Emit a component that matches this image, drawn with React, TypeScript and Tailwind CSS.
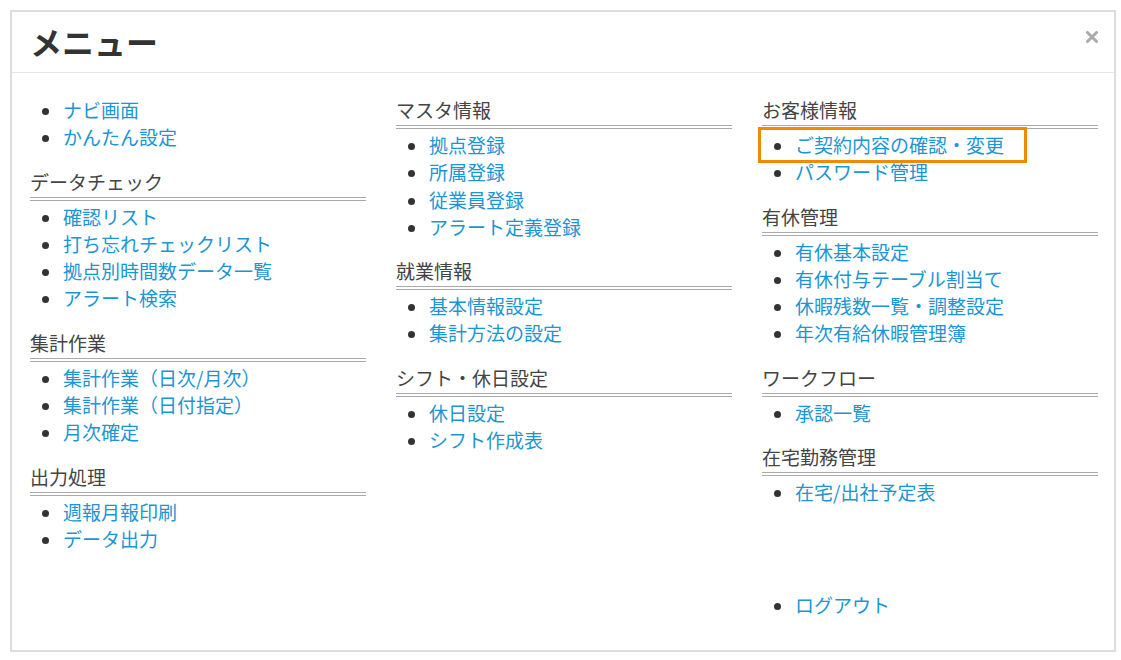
import React from "react";

type Section = {
    title?: string;
    items: string[];
    gapTop?: string;
};

const columns: Section[][] = [
    [
        { items: ["ナビ画面", "かんたん設定"] },
        {
            title: "データチェック",
            items: ["確認リスト", "打ち忘れチェックリスト", "拠点別時間数データ一覧", "アラート検索"],
        },
        {
            title: "集計作業",
            items: ["集計作業（日次/月次）", "集計作業（日付指定）", "月次確定"],
        },
        { title: "出力処理", items: ["週報月報印刷", "データ出力"] },
    ],
    [
        {
            title: "マスタ情報",
            items: ["拠点登録", "所属登録", "従業員登録", "アラート定義登録"],
        },
        { title: "就業情報", items: ["基本情報設定", "集計方法の設定"] },
        { title: "シフト・休日設定", items: ["休日設定", "シフト作成表"] },
    ],
    [
        { title: "お客様情報", items: ["ご契約内容の確認・変更", "パスワード管理"] },
        {
            title: "有休管理",
            items: ["有休基本設定", "有休付与テーブル割当て", "休暇残数一覧・調整設定", "年次有給休暇管理簿"],
        },
        { title: "ワークフロー", items: ["承認一覧"] },
        { title: "在宅勤務管理", items: ["在宅/出社予定表"] },
        { items: ["ログアウト"], gapTop: "mt-[86px]" },
    ],
];

const highlighted = "ご契約内容の確認・変更";

function MenuSection({ section, first }: { section: Section; first: boolean }) {
    return (
        <div className={first ? "" : section.gapTop ?? "mt-[17px]"}>
            {section.title && (
                <h3 className="text-[19px] leading-[27px] text-[#444] font-normal pb-[2px] border-b-[4px] border-double border-[#aaa]">
                    {section.title}
                </h3>
            )}
            <ul className={`list-disc pl-[33px] text-[#333] ${section.title ? "mt-[2px]" : ""}`}>
                {section.items.map((item) => (
                    <li key={item} className="text-[19px] leading-[27.3px]">
                        <a href="#" className="relative inline-block text-[#1b95d4]">
                            {item}
                            {item === highlighted && (
                                <span className="absolute -left-[37px] -right-[23px] -top-[4px] -bottom-[5px] border-[3px] border-[#f08a00] pointer-events-none" />
                            )}
                        </a>
                    </li>
                ))}
            </ul>
        </div>
    );
}

export default function App() {
    return (
        <div
            className="bg-white p-[10px] w-[1126px]"
            style={{ fontFamily: '"Noto Sans CJK JP", "Noto Sans", sans-serif' }}
        >
            <div className="w-[1106px] border-2 border-[#ddd] bg-white">
                <div className="h-[61px] flex items-center justify-between pl-[18px] pr-[16px] border-b border-[#e5e5e5]">
                    <h1 className="text-[32px] font-bold text-[#333] leading-none pb-[2px]">メニュー</h1>
                    <button className="text-[#aaa] -mt-[10px]" aria-label="close">
                        <svg width="12" height="12" viewBox="0 0 12 12">
                            <path d="M1.5 1.5 L10.5 10.5 M10.5 1.5 L1.5 10.5" stroke="currentColor" strokeWidth="3" strokeLinecap="round" />
                        </svg>
                    </button>
                </div>
                <div className="grid grid-cols-[336px_336px_336px] gap-x-[30px] pl-[18px] pt-[23px] pb-[31px]">
                    {columns.map((col, ci) => (
                        <div key={ci}>
                            {col.map((section, si) => (
                                <MenuSection key={si} section={section} first={si === 0} />
                            ))}
                        </div>
                    ))}
                </div>
            </div>
        </div>
    );
}
